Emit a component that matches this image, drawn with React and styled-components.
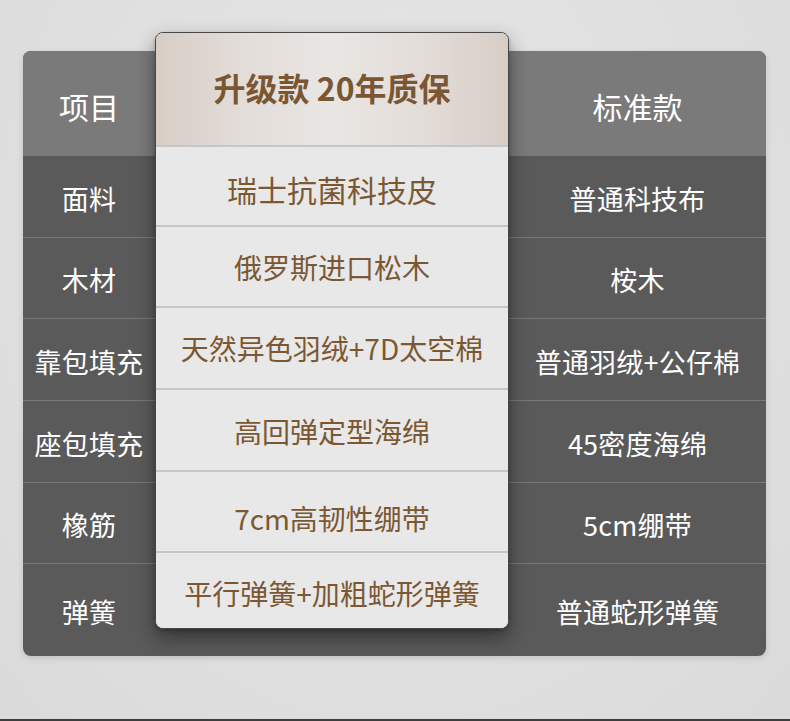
import React from 'react';
import styled, { createGlobalStyle } from 'styled-components';

const Global = createGlobalStyle`
  html, body { margin: 0; padding: 0; }
  body {
    font-family: "Noto Sans CJK SC", "Noto Sans", sans-serif;
    background: #e0e0e0;
  }
`;

const Page = styled.div`
  width: 790px;
  height: 721px;
  box-sizing: border-box;
  padding: 51px 24px 0 23px;
  background: radial-gradient(ellipse at 50% 35%, #e7e7e7 0%, #dedede 70%, #dadada 100%);
  border-bottom: 2px solid #3c3c3c;
`;

const Table = styled.div`
  display: grid;
  grid-template-columns: 132px 354px 257px;
  align-items: start;
  width: 743px;
  height: 605px;
  background: #5a5a5a;
  border-radius: 8px;
  box-shadow: 0 2px 6px rgba(0, 0, 0, 0.12);
`;

const SideColumn = styled.div`
  display: flex;
  flex-direction: column;
`;

const SideHeader = styled.div`
  height: 104px;
  display: flex;
  align-items: center;
  justify-content: center;
  padding-top: 6px;
  box-sizing: border-box;
  background: #7a7a7a;
  color: #ffffff;
  font-size: 30px;
  font-weight: 400;
  border-radius: ${p => (p.$side === 'left' ? '8px 0 0 0' : '0 8px 0 0')};
`;

const SideCell = styled.div`
  height: ${p => p.$h}px;
  box-sizing: border-box;
  display: flex;
  align-items: center;
  justify-content: center;
  border-top: 1px solid #787878;
  color: #ffffff;
  font-size: 27px;
  font-weight: 400;
  padding-top: 3px;
  white-space: nowrap;
  letter-spacing: 0.2px;
`;

const Card = styled.div`
  margin-top: -19px;
  height: 597px;
  box-sizing: border-box;
  display: flex;
  flex-direction: column;
  background: #e8e8e8;
  border: 1px solid #474747;
  border-radius: 8px;
  overflow: hidden;
  box-shadow: 0 9px 20px rgba(0, 0, 0, 0.4), 0 2px 4px rgba(0, 0, 0, 0.2);
  position: relative;
  z-index: 1;
`;

const CardHeader = styled.div`
  height: 112px;
  flex: none;
  display: flex;
  align-items: center;
  justify-content: center;
  padding-bottom: 4px;
  box-sizing: border-box;
  background: linear-gradient(90deg, #d7cdc5 0%, #e3ddd9 25%, #e9e6e3 50%, #e3ddd9 75%, #d7cdc5 100%);
  color: #7a5732;
  font-size: 32px;
  font-weight: 700;
  white-space: nowrap;
`;

const CardCell = styled.div`
  height: ${p => p.$h}px;
  flex: none;
  box-sizing: border-box;
  display: flex;
  align-items: center;
  justify-content: center;
  border-top: 2px solid #c6c6c6;
  background: #e8e8e8;
  color: #7b5833;
  font-size: ${p => p.$size}px;
  font-weight: 400;
  padding-top: ${p => p.$pt}px;
  white-space: nowrap;
`;

const rows = [
  { label: '面料', up: '瑞士抗菌科技皮', std: '普通科技布', sh: 82, ch: 80, size: 30, pt: 6 },
  { label: '木材', up: '俄罗斯进口松木', std: '桉木', sh: 81, ch: 81, size: 28, pt: 0 },
  { label: '靠包填充', up: '天然异色羽绒+7D太空棉', std: '普通羽绒+公仔棉', sh: 82, ch: 82, size: 28, pt: 0 },
  { label: '座包填充', up: '高回弹定型海绵', std: '45密度海绵', sh: 82, ch: 82, size: 28, pt: 2 },
  { label: '橡筋', up: '7cm高韧性绷带', std: '5cm绷带', sh: 81, ch: 81, size: 28, pt: 12 },
  { label: '弹簧', up: '平行弹簧+加粗蛇形弹簧', std: '普通蛇形弹簧', sh: 93, ch: 77, size: 28, pt: 4 },
];

export default function App() {
  return (
    <>
      <Global />
      <Page>
        <Table>
          <SideColumn>
            <SideHeader $side="left">项目</SideHeader>
            {rows.map(r => (
              <SideCell key={r.label} $h={r.sh}>{r.label}</SideCell>
            ))}
          </SideColumn>
          <Card>
            <CardHeader>升级款 20年质保</CardHeader>
            {rows.map(r => (
              <CardCell key={r.label} $h={r.ch} $size={r.size} $pt={r.pt}>{r.up}</CardCell>
            ))}
          </Card>
          <SideColumn>
            <SideHeader $side="right">标准款</SideHeader>
            {rows.map(r => (
              <SideCell key={r.label} $h={r.sh}>{r.std}</SideCell>
            ))}
          </SideColumn>
        </Table>
      </Page>
    </>
  );
}
